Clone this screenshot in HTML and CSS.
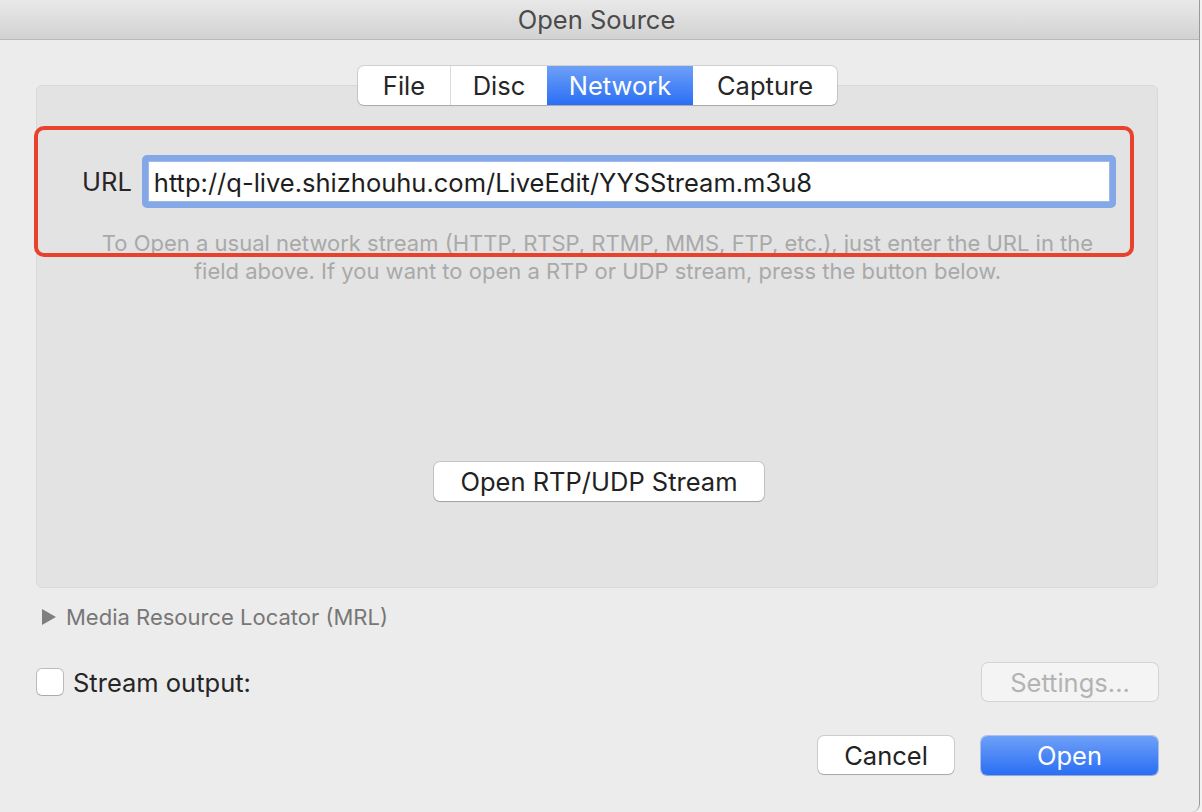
FILE: index.html
```html
<!DOCTYPE html>
<html>
<head>
<meta charset="utf-8">
<link rel="stylesheet" href="styles.css">
</head>
<body>
<div class="window">
  <div class="titlebar">Open Source</div>
  <div class="content">
    <div class="tabs">
      <div class="tab tab-file">File</div>
      <div class="tab tab-disc">Disc</div>
      <div class="tab tab-net active">Network</div>
      <div class="tab tab-cap">Capture</div>
    </div>
    <div class="panel">
      <div class="highlight"></div>
      <div class="url-row">
        <span class="url-label">URL</span>
        <div class="url-field">http://q-live.shizhouhu.com/LiveEdit/YYSStream.m3u8</div>
      </div>
      <p class="help">To Open a usual network stream (HTTP, RTSP, RTMP, MMS, FTP, etc.), just enter the URL in the<br>field above. If you want to open a RTP or UDP stream, press the button below.</p>
      <div class="rtp-row">
        <div class="btn rtp-btn">Open RTP/UDP Stream</div>
      </div>
    </div>
    <div class="mrl">
      <span class="disclosure"></span>
      <span>Media Resource Locator (MRL)</span>
    </div>
    <div class="stream-row">
      <div class="check-wrap">
        <span class="checkbox"></span>
        <span class="stream-label">Stream output:</span>
      </div>
      <div class="btn settings-btn">Settings...</div>
    </div>
    <div class="actions">
      <div class="btn cancel-btn">Cancel</div>
      <div class="btn open-btn">Open</div>
    </div>
  </div>
</div>
</body>
</html>
```
FILE: styles.css
```css
* { box-sizing: border-box; }
html, body {
  margin: 0;
  padding: 0;
  background: #f2f2f2;
  font-family: Inter, "Noto Sans", "Liberation Sans", sans-serif;
}
.window {
  width: 1200px;
  height: 812px;
  background: #ececec;
  border-right: 1px solid #9a9a9a;
  border-bottom-right-radius: 8px;
  overflow: hidden;
  display: flex;
  flex-direction: column;
}
.titlebar {
  height: 40px;
  flex: none;
  background: linear-gradient(#e9e9e9, #d2d2d2);
  border-bottom: 1px solid #b9b9b9;
  display: flex;
  align-items: center;
  justify-content: center;
  font-size: 25.5px;
  color: #4b4b4b;
  padding-right: 6px;
}
.content {
  flex: 1;
  padding: 26px 41px 0 36px;
  display: flex;
  flex-direction: column;
}
.tabs {
  align-self: center;
  margin-left: 1px;
  display: flex;
  height: 39px;
  background: #fff;
  border-radius: 6px;
  box-shadow: 0 0 0 1px rgba(0,0,0,0.12), 0 1px 1px rgba(0,0,0,0.15);
  position: relative;
  z-index: 2;
  overflow: hidden;
}
.tab {
  display: flex;
  align-items: center;
  justify-content: center;
  font-size: 25.5px;
  color: #262626;
  border-left: 1px solid #dcdcdc;
}
.tab-file { width: 92px; border-left: none; }
.tab-disc { width: 97px; }
.tab-net { width: 146px; }
.tab-cap { width: 144px; }
.tab.active {
  background: linear-gradient(#6ea0f7, #2a6ef5);
  color: #fff;
  border-left: none;
}
.tab.active + .tab { border-left: none; }
.panel {
  position: relative;
  margin-top: -20px;
  height: 503px;
  background: #e3e3e3;
  border: 1px solid #d9d9d9;
  border-radius: 6px;
  padding: 69px 41px 0 45px;
  display: flex;
  flex-direction: column;
}
.highlight {
  position: absolute;
  left: -3px;
  top: 40px;
  width: 1100px;
  height: 131px;
  border: 4px solid #e8412c;
  border-radius: 10px;
  pointer-events: none;
}
.url-row {
  display: flex;
  align-items: center;
  gap: 10px;
}
.url-label {
  font-size: 25.5px;
  color: #262626;
}
.url-field {
  flex: 1;
  height: 53px;
  border: 6px solid #84a7e8;
  border-radius: 5px;
  background: #fff;
  box-shadow: inset 0 0 0 1px #9fb8e6;
  display: flex;
  align-items: center;
  padding-left: 6px;
  padding-top: 1px;
  font-size: 25.5px;
  color: #1e1e1e;
}
.help {
  margin: 21px 0 0 0;
  text-align: center;
  font-size: 22px;
  line-height: 28px;
  color: #a9a9a9;
  white-space: nowrap;
  padding-left: 0;
  padding-right: 3px;
}
.rtp-row {
  display: flex;
  justify-content: center;
  margin-top: 177px;
  padding-left: 0;
}
.btn {
  display: flex;
  align-items: center;
  justify-content: center;
  background: #fff;
  border-radius: 6px;
  box-shadow: 0 0 0 1px rgba(0,0,0,0.13), 0 1px 1px rgba(0,0,0,0.18);
  font-size: 25.5px;
  color: #222;
}
.rtp-btn { width: 330px; height: 39px; }
.mrl {
  display: flex;
  align-items: center;
  gap: 10px;
  margin-top: 16px;
  padding-left: 6px;
  height: 26px;
  font-size: 22px;
  color: #777;
}
.disclosure {
  width: 0;
  height: 0;
  border-left: 14px solid #7f7f7f;
  border-top: 8px solid transparent;
  border-bottom: 8px solid transparent;
}
.stream-row {
  display: flex;
  align-items: center;
  justify-content: space-between;
  margin-top: 33px;
  padding-left: 1px;
}
.check-wrap {
  display: flex;
  align-items: center;
  gap: 10px;
}
.checkbox {
  width: 26px;
  height: 26px;
  background: #fff;
  border-radius: 5px;
  box-shadow: 0 0 0 1px rgba(0,0,0,0.2), 0 1px 1px rgba(0,0,0,0.1);
}
.stream-label {
  font-size: 25.5px;
  color: #262626;
}
.settings-btn {
  width: 176px;
  height: 38px;
  background: #f4f4f4;
  color: #b3b3b3;
  box-shadow: 0 0 0 1px rgba(0,0,0,0.1);
}
.actions {
  display: flex;
  justify-content: flex-end;
  gap: 27px;
  margin-top: 35px;
}
.cancel-btn { width: 136px; height: 38px; }
.open-btn {
  width: 177px;
  height: 39px;
  background: linear-gradient(#6ea0f7, #2a6ef5);
  color: #fff;
  box-shadow: 0 0 0 1px rgba(30,90,220,0.3), 0 1px 1px rgba(0,0,0,0.15);
}
```
